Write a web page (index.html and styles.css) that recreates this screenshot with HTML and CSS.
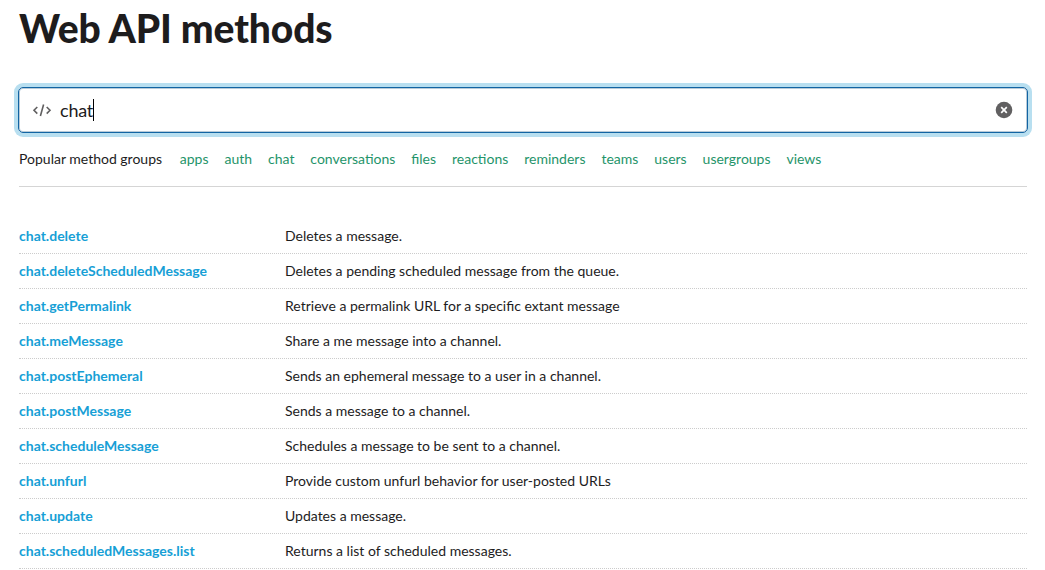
FILE: index.html
```html
<!DOCTYPE html>
<html lang="en">
<head>
<meta charset="utf-8">
<title>Web API methods</title>
<link rel="stylesheet" href="styles.css">
</head>
<body>
<main class="page">
  <h1 class="title">Web API methods</h1>
  <div class="search">
    <svg class="code-icon" viewBox="0 0 20 14" fill="none" stroke="#616061" stroke-width="1.600"><path d="M5.300 4 2 7.300 5.300 10.600M14.700 4 18 7.300 14.700 10.600M11.600 1.500 8.400 13"/></svg>
    <span class="query">chat</span><span class="caret"></span>
    <svg class="clear" viewBox="0 0 18 18"><circle cx="9" cy="9" r="8.300" fill="#616061"/><path d="M6.200 6.200l5.600 5.600M11.800 6.200l-5.600 5.600" stroke="#fff" stroke-width="1.700"/></svg>
  </div>
  <nav class="groups">
    <span class="label">Popular method groups</span>
    <a>apps</a><a>auth</a><a>chat</a><a>conversations</a><a>files</a><a>reactions</a><a>reminders</a><a>teams</a><a>users</a><a>usergroups</a><a>views</a>
  </nav>
  <div class="methods">
    <div class="row"><a class="name">chat.delete</a><span>Deletes a message.</span></div>
    <div class="row"><a class="name">chat.deleteScheduledMessage</a><span>Deletes a pending scheduled message from the queue.</span></div>
    <div class="row"><a class="name">chat.getPermalink</a><span>Retrieve a permalink URL for a specific extant message</span></div>
    <div class="row"><a class="name">chat.meMessage</a><span>Share a me message into a channel.</span></div>
    <div class="row"><a class="name">chat.postEphemeral</a><span>Sends an ephemeral message to a user in a channel.</span></div>
    <div class="row"><a class="name">chat.postMessage</a><span>Sends a message to a channel.</span></div>
    <div class="row"><a class="name">chat.scheduleMessage</a><span>Schedules a message to be sent to a channel.</span></div>
    <div class="row"><a class="name">chat.unfurl</a><span>Provide custom unfurl behavior for user-posted URLs</span></div>
    <div class="row"><a class="name">chat.update</a><span>Updates a message.</span></div>
    <div class="row"><a class="name">chat.scheduledMessages.list</a><span>Returns a list of scheduled messages.</span></div>
  </div>
</main>
</body>
</html>
```
FILE: styles.css
```css
* { box-sizing: border-box; }
body { margin: 0; background: #fff; color: #1d1c1d; font: 14px/20px Lato, sans-serif; overflow: hidden; }
.page { padding: 4px 18px 0 19px; }
.title { margin: 0 0 35px; font: 900 39px/48px Lato, sans-serif; letter-spacing: -0.12px; white-space: nowrap; }
.search { display: flex; align-items: center; height: 46px; margin: 0 -1px; padding: 0 14px 0 13px; border: 1px solid #1264a3; border-radius: 5px; box-shadow: 0 0 0 4px #b8dff0, inset 0 0 0 1px #b9cbd8; font-size: 18px; line-height: 26px; }
.code-icon { width: 20px; height: 14px; margin-right: 8px; }
.query { letter-spacing: -0.2px; }
.caret { width: 1px; height: 22px; background: #000; }
.clear { width: 18px; height: 18px; margin-left: auto; }
.groups { display: flex; gap: 15.95px; height: 54px; padding-top: 16px; border-bottom: 1px solid #d5d5d5; color: #1f946a; }
.label { color: #1d1c1d; margin-right: 1.8px; }
.methods { padding-top: 32px; }
.row { display: grid; grid-template-columns: 266px 1fr; height: 35px; padding-top: 7px; border-bottom: 1px dotted #ccc; }
.name { color: #179fd6; font-weight: 700; }
```
